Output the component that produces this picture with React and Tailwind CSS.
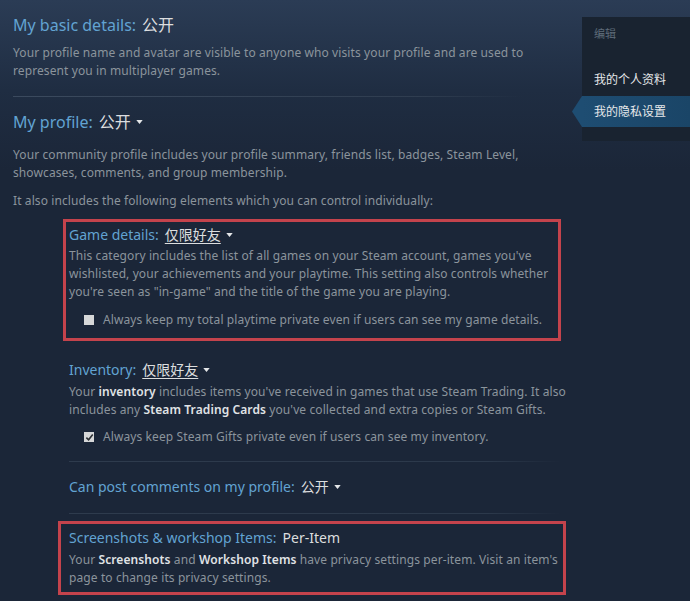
import React from "react";

const font = { fontFamily: '"Noto Sans", "Noto Sans CJK SC", sans-serif' };

function Caret() {
  return (
    <svg width="7" height="4" viewBox="0 0 8 5" className="inline-block ml-[5px] mb-[3px]">
      <path d="M0 0 L8 0 L4 5 Z" fill="#e4e6e8" />
    </svg>
  );
}

function Box({ checked }) {
  return (
    <span className="inline-flex w-[10px] h-[10px] bg-[#d6d7d8] items-center justify-center mr-[9px] shrink-0">
      {checked && (
        <svg width="9" height="9" viewBox="0 0 10 10">
          <path d="M1.5 5.2 L4 7.6 L8.6 1.8" stroke="#2b2f33" strokeWidth="1.8" fill="none" />
        </svg>
      )}
    </span>
  );
}

function Val({ children, underline }) {
  return (
    <span className={"text-[#dcdedf] ml-[6px] " + (underline ? "underline underline-offset-[3px] decoration-1" : "")}>
      {children}
    </span>
  );
}

export default function App() {
  return (
    <div
      className="w-[690px] h-[601px] overflow-hidden flex bg-[linear-gradient(180deg,#2b3c55_0px,#1f2d42_90px,#1b2638_170px,#1b2638_601px)]"
      style={font}
    >
      <div className="w-[560px] ml-[13px] pt-[14px] shrink-0 text-[12px] leading-[18px] tracking-[0.1px] text-[#8b949c]">
        <div className="text-[16px] leading-[22px] tracking-normal text-[#62a3d2]">
          My basic details:<Val>公开</Val>
        </div>
        <p className="mt-[8px] w-[540px]">
          Your profile name and avatar are visible to anyone who visits your profile and are used to represent you in multiplayer games.
        </p>
        <div className="h-px bg-[linear-gradient(90deg,#3b4a5e,#2f3d50_80%,transparent)] mt-[16px] w-[510px]" />
        <div className="text-[16px] leading-[22px] tracking-normal text-[#62a3d2] mt-[14px]">
          My profile:<Val>公开</Val>
          <Caret />
        </div>
        <p className="mt-[13px] w-[540px]">
          Your community profile includes your profile summary, friends list, badges, Steam Level, showcases, comments, and group membership.
        </p>
        <p className="mt-[10px]">It also includes the following elements which you can control individually:</p>

        <div className="mt-[9px] ml-[50px] w-[498px] border-[3px] border-[#c4434c] pl-[3px] pr-[6px] pt-[3px] pb-[9px]">
          <div className="text-[14px] leading-[20px] tracking-normal text-[#62a3d2]">
            Game details:<Val underline>仅限好友</Val>
            <Caret />
          </div>
          <p className="mt-[2px]">
            This category includes the list of all games on your Steam account, games you've wishlisted, your achievements and your playtime. This setting also controls whether you're seen as "in-game" and the title of the game you are playing.
          </p>
          <div className="mt-[10px] ml-[15px] flex items-center">
            <Box />
            Always keep my total playtime private even if users can see my game details.
          </div>
        </div>

        <div className="ml-[56px] mt-[19px]">
          <div className="text-[14px] leading-[20px] tracking-normal text-[#62a3d2]">
            Inventory:<Val underline>仅限好友</Val>
            <Caret />
          </div>
          <p className="mt-[3px]">
            Your <b className="text-[#e0e3e6] font-semibold">inventory</b> includes items you've received in games that use Steam Trading. It also includes any <b className="text-[#e0e3e6] font-semibold">Steam Trading Cards</b> you've collected and extra copies or Steam Gifts.
          </p>
          <div className="mt-[9px] ml-[15px] flex items-center">
            <Box checked />
            Always keep Steam Gifts private even if users can see my inventory.
          </div>
          <div className="h-px bg-[linear-gradient(90deg,#2e3b4d,#2c394b_85%,transparent)] mt-[15px] w-[492px]" />
          <div className="text-[14px] leading-[20px] tracking-normal text-[#62a3d2] mt-[15px]">
            Can post comments on my profile:<Val>公开</Val>
            <Caret />
          </div>
          <div className="h-px bg-[linear-gradient(90deg,#2e3b4d,#2c394b_85%,transparent)] mt-[16px] w-[492px]" />
        </div>

        <div className="mt-[7px] ml-[45px] w-[508px] border-[3px] border-[#c4434c] pl-[8px] pr-0 pt-[4px] pb-[5px]">
          <div className="text-[14px] leading-[20px] tracking-normal text-[#62a3d2]">
            Screenshots &amp; workshop Items:<Val>Per-Item</Val>
          </div>
          <p className="mt-[3px]">
            Your <b className="text-[#e0e3e6] font-semibold">Screenshots</b> and <b className="text-[#e0e3e6] font-semibold">Workshop Items</b> have privacy settings per-item. Visit an item's page to change its privacy settings.
          </p>
        </div>
      </div>

      <div className="ml-auto mt-[17px] w-[108px] h-[124px] bg-[#192330] relative">
        <div className="pl-[12px] pt-[9px] text-[11px] leading-[16px] text-[#5e6b79]">编辑</div>
        <div className="pl-[12px] mt-[29px] text-[12px] leading-[18px] text-[#e6e8ea]">我的个人资料</div>
        <div className="absolute left-[-10px] top-[79px] w-[118px] h-[31px] flex items-center">
          <svg width="10" height="31" viewBox="0 0 10 31" className="shrink-0">
            <path d="M10 0 L0 15.5 L10 31 Z" fill="#1e4d72" />
          </svg>
          <div className="flex-1 h-full bg-[linear-gradient(90deg,#1e4d72,#1a4567)] pl-[12px] flex items-center text-[12px] text-[#e6e8ea]">
            我的隐私设置
          </div>
        </div>
      </div>
    </div>
  );
}
